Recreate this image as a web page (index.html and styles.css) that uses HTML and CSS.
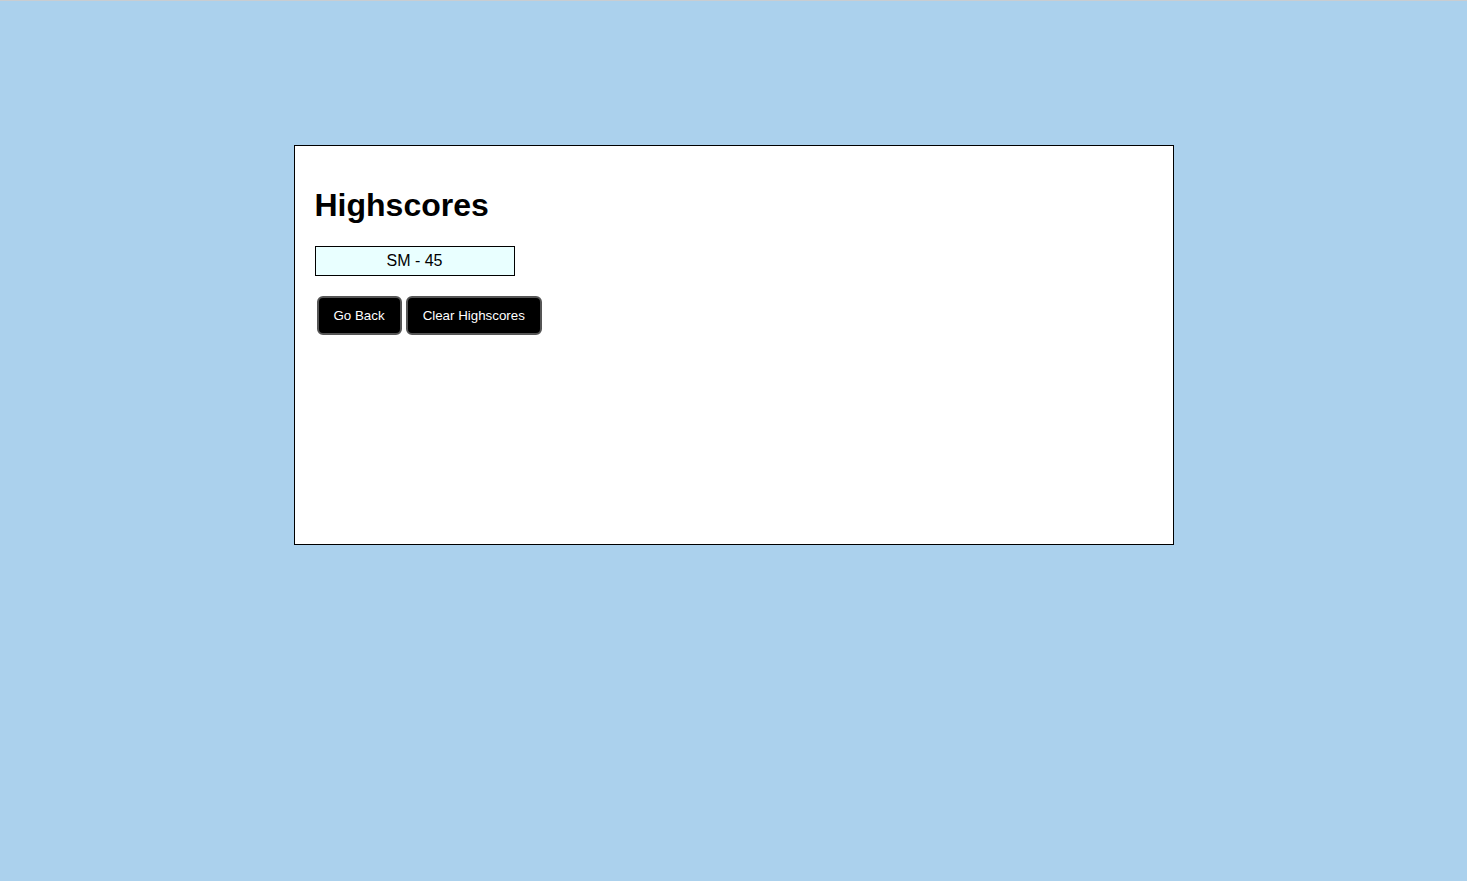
FILE: index.html
```html
<!DOCTYPE html>
<html lang="en">
<head>
<meta charset="utf-8">
<title>Highscores</title>
<link rel="stylesheet" href="styles.css">
</head>
<body>
  <main class="card">
    <h1 class="title">Highscores</h1>
    <ul class="scores">
      <li class="score">SM - 45</li>
    </ul>
    <div class="actions">
      <button class="btn">Go Back</button>
      <button class="btn">Clear Highscores</button>
    </div>
  </main>
</body>
</html>
```

FILE: styles.css
```css
html, body {
  margin: 0;
  padding: 0;
}
body {
  background: #abd1ed;
  border-top: 1px solid #c9cdd1;
  min-height: 880px;
  font-family: "Liberation Sans", Arial, sans-serif;
  color: #000;
  padding-top: 144px;
  box-sizing: border-box;
}
.card {
  width: 880px;
  height: 400px;
  box-sizing: border-box;
  margin: 0 auto;
  background: #fff;
  border: 1px solid #000;
  padding: 41px 20px 20px;
}
.title {
  margin: 0;
  font-size: 32px;
  font-weight: bold;
  line-height: 37px;
}
.scores {
  list-style: none;
  margin: 22px 0 0;
  padding: 0;
}
.score {
  width: 200px;
  box-sizing: border-box;
  border: 1px solid #000;
  background: #e9ffff;
  text-align: center;
  font-size: 16px;
  line-height: 18px;
  padding: 5px 0;
}
.actions {
  display: flex;
  gap: 4px;
  margin-top: 20px;
  padding-left: 2px;
}
.btn {
  font-family: "Liberation Sans", Arial, sans-serif;
  font-size: 13.33px;
  line-height: 16px;
  background: #000;
  color: #fff;
  border: 2px solid #555;
  border-radius: 6px;
  padding: 9px 15px;
  height: 39px;
  box-sizing: border-box;
}
```
